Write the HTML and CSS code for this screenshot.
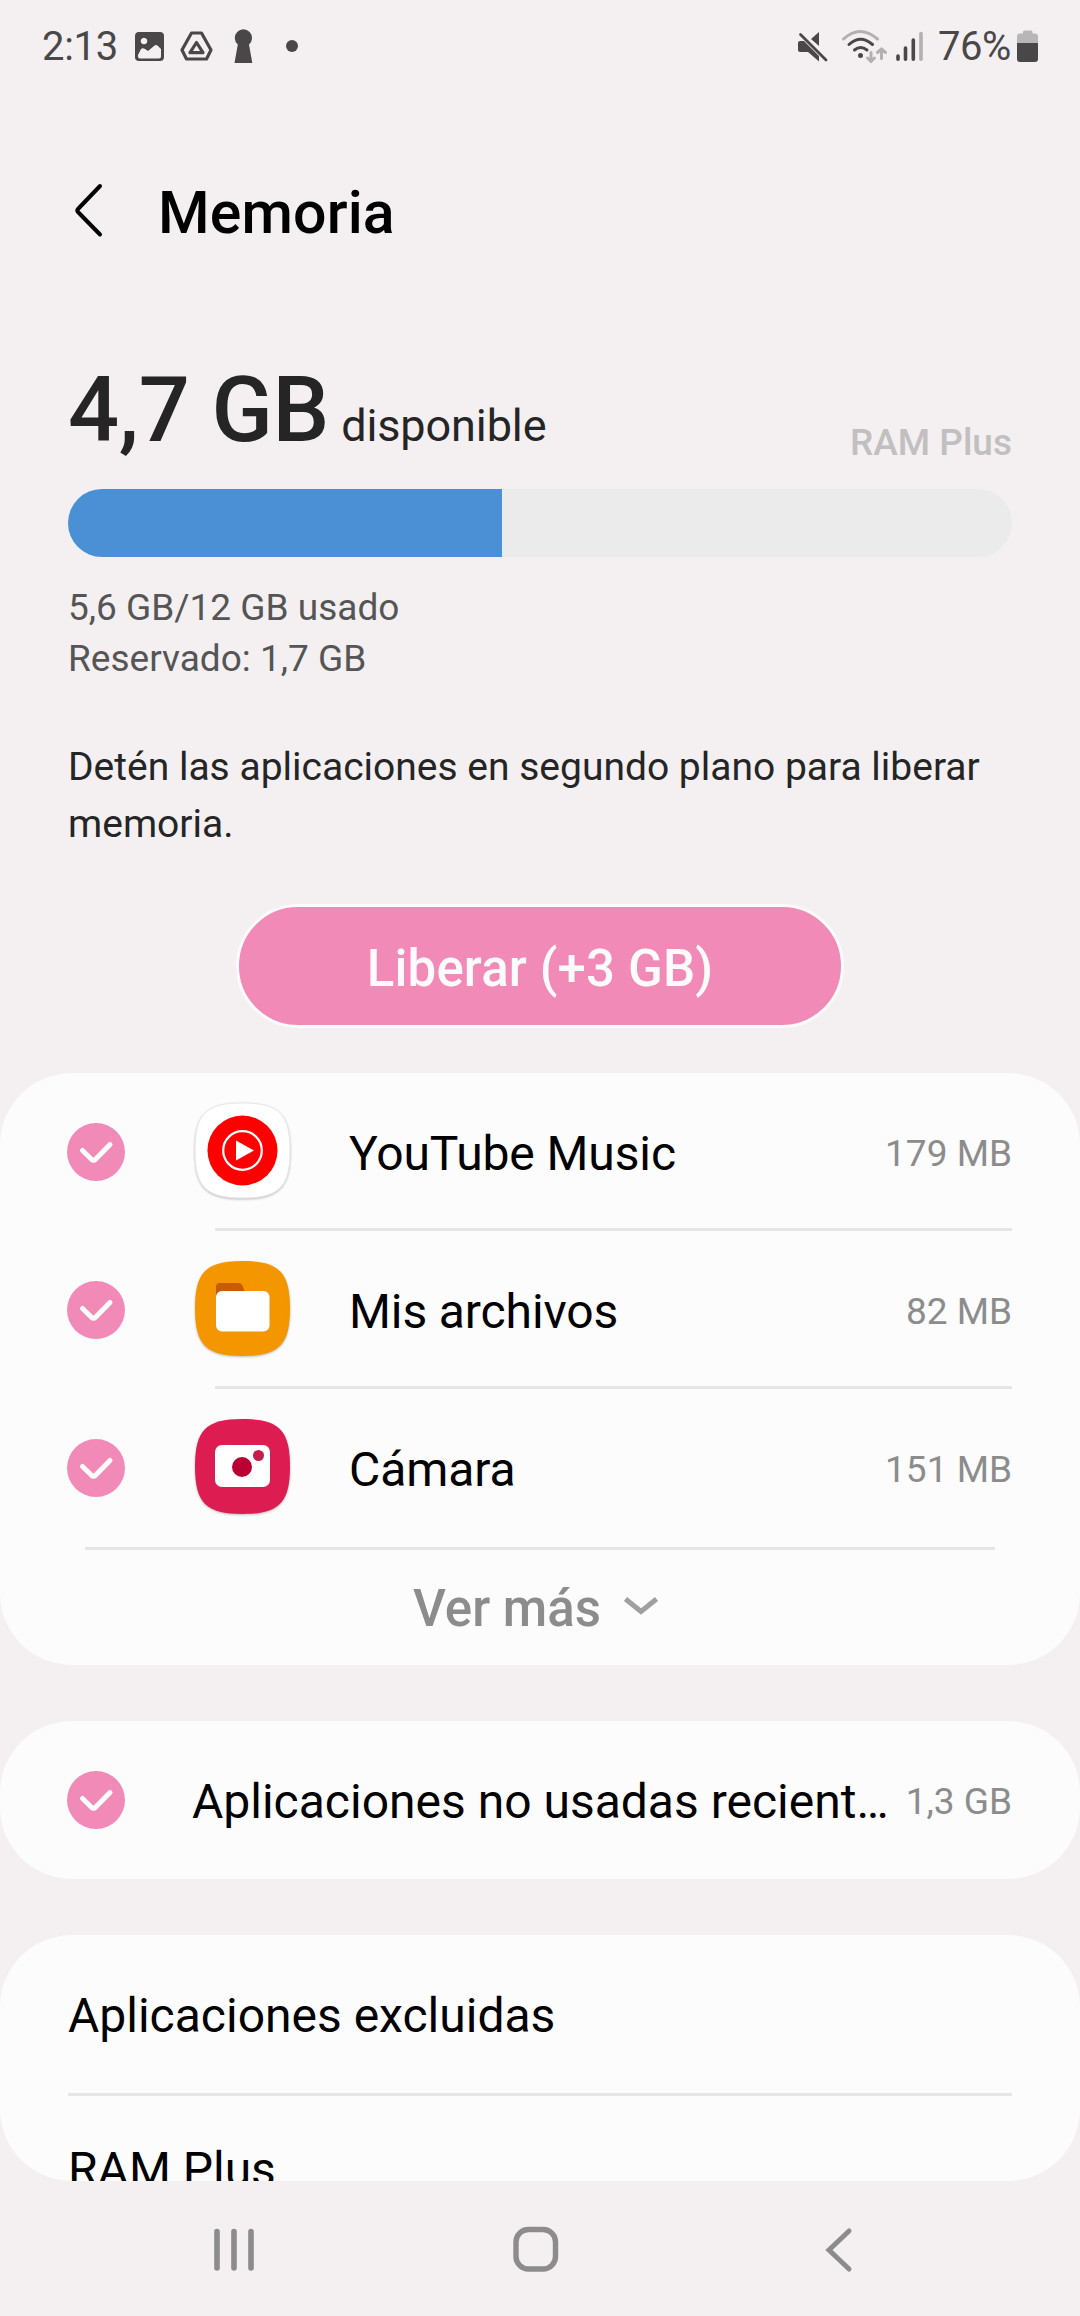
FILE: index.html
```html
<!DOCTYPE html>
<html lang="es">
<head>
<meta charset="utf-8">
<title>Memoria</title>
<link rel="stylesheet" href="styles.css">
</head>
<body>
<svg class="defs" aria-hidden="true">
  <symbol id="check" viewBox="0 0 58 58">
    <circle cx="29" cy="29" r="29" fill="#f18ab7"/>
    <path d="M15.500 27.500L24.500 36.300Q26.500 38 28.500 36.300L43 21.500" fill="none" stroke="#fcfcfc" stroke-width="5" stroke-linecap="round" stroke-linejoin="round"/>
  </symbol>
</svg>
<div class="screen">
  <header class="status">
    <span class="clock">2:13</span>
    <svg class="status-left" width="180" height="40" viewBox="130 26 180 40">
      <path fill="#4a4748" fill-rule="evenodd" d="M139 32h21a4 4 0 0 1 4 4v21a4 4 0 0 1-4 4h-21a4 4 0 0 1-4-4v-21a4 4 0 0 1 4-4zM144 37.700a3.300 3.300 0 1 0 .01 0zM138 55v1.500q0 2 2 2h19q2 0 2-2v-7.500l-3-3q-2-2-4 0l-6 5-3-2q-2-1.500-4 0z"/>
      <g fill="none" stroke="#4a4748" stroke-width="3.200" stroke-linejoin="round"><path d="M191.500 33h10l9.500 17-4.500 9h-20l-4.500-9z"/><path d="M196.500 42.500l6.500 10.200h-13z"/></g>
      <path fill="#4a4748" d="M234.500 63l3.300-18.500a8.600 8.600 0 1 1 11.200 0l3.300 18.500z"/>
      <circle cx="292" cy="46" r="6" fill="#4a4748"/>
    </svg>
    <svg class="status-right" width="132" height="40" viewBox="796 26 132 40">
      <path fill="#4a4748" d="M819 32v14l-8-7zM800 41h4l15 15v5.500l-11-9.500h-8q-2 0-2-2v-7q0-2 2-2z"/>
      <path d="M800.500 34.500l25.500 25.500" stroke="#4a4748" stroke-width="2.800" stroke-linecap="round"/>
      <g fill="none" stroke-width="3" stroke-linecap="round"><path d="M843.500 39q16.500-15 34 0" stroke="#b3b0b1"/><path d="M849 44.500q11.500-10.500 23.500 0M854.500 50q6-5 12.500 0" stroke="#4a4748"/></g>
      <circle cx="860.500" cy="55.500" r="2.500" fill="#4a4748"/>
      <path d="M871 52.500v8M867.500 58l3.500 3.500 3.500-3.500M881.500 58.500v-9M877.500 52.500l4-3.500 4 3.500" fill="none" stroke="#b3b0b1" stroke-width="3" stroke-linecap="round"/>
      <path d="M898 56v3.300M905.500 48v11.300M913.300 40v19.300" stroke="#4a4748" stroke-width="3.600" stroke-linecap="round"/>
      <path d="M921 33.500v25.800" stroke="#b3b0b1" stroke-width="3.600" stroke-linecap="round"/>
    </svg>
    <span class="percent">76%</span>
    <svg class="battery" width="22" height="32" viewBox="0 0 22 32"><path fill="#b9b6b7" d="M6 3.500V2q0-1.500 1.500-1.500h6.500q1.500 0 1.500 1.500v1.500h2.500q3 0 3 3v6.500h-21v-6.500q0-3 3-3z"/><path fill="#4a4748" d="M0 13h21v16q0 3-3 3h-15q-3 0-3-3z"/></svg>
  </header>

  <div class="titlebar">
    <svg class="back" width="30" height="56" viewBox="0 0 30 56"><path d="M27 3L5 26q-1.500 1.500 0 3L27 51.500" fill="none" stroke="#000" stroke-width="4" stroke-linecap="round" stroke-linejoin="round"/></svg>
    <h1>Memoria</h1>
  </div>

  <section class="summary">
    <div class="figures">
      <div class="available"><span class="amount">4,7 GB</span><span class="unit">disponible</span></div>
      <span class="plus">RAM Plus</span>
    </div>
    <div class="bar"><div class="fill" style="width:46%"></div></div>
    <p class="usage"><span>5,6 GB/12 GB usado</span><br><span>Reservado: 1,7 GB</span></p>
    <p class="hint"><span>Detén las aplicaciones en segundo plano para liberar</span><br>memoria.</p>
    <button class="free"><span>Liberar (+3 GB)</span></button>
  </section>

  <section class="card apps">
    <div class="row">
      <svg class="check"><use href="#check"/></svg>
      <svg class="icon" viewBox="0 0 99 99"><path class="shape" d="M49.500 2C86 2 97 13 97 49.500S86 97 49.500 97 2 86 2 49.500 13 2 49.500 2z" fill="#fff" stroke="#e8e8e8"/><circle cx="49.500" cy="49.500" r="35" fill="#f00"/><circle cx="49.500" cy="49.500" r="19.300" fill="none" stroke="#fff" stroke-width="2.200"/><path d="M43 39.500v20l18-10z" fill="#fff"/></svg>
      <span class="name">YouTube Music</span><span class="size">179 MB</span>
    </div>
    <div class="row">
      <svg class="check"><use href="#check"/></svg>
      <svg class="icon" viewBox="0 0 99 99"><path class="shape" d="M49.500 2C86 2 97 13 97 49.500S86 97 49.500 97 2 86 2 49.500 13 2 49.500 2z" fill="#f39600"/><path d="M23 40V28q0-4 4-4h18q4 0 5 4l2 5v7z" fill="#c65c0a"/><rect x="23" y="32" width="53.500" height="40.500" rx="6" fill="#fff"/></svg>
      <span class="name">Mis archivos</span><span class="size">82 MB</span>
    </div>
    <div class="row last">
      <svg class="check"><use href="#check"/></svg>
      <svg class="icon" viewBox="0 0 99 99"><path class="shape" d="M49.500 2C86 2 97 13 97 49.500S86 97 49.500 97 2 86 2 49.500 13 2 49.500 2z" fill="#dd1d51"/><rect x="22" y="28" width="55" height="42" rx="7" fill="#fff"/><circle cx="49" cy="50" r="10" fill="#b80035"/><circle cx="65.500" cy="38.500" r="5.500" fill="#c61b4c"/></svg>
      <span class="name">Cámara</span><span class="size">151 MB</span>
    </div>
    <div class="more"><span>Ver más</span><svg width="36" height="20" viewBox="0 0 36 20"><path d="M2.500 3L18 15.500 33.500 3" fill="none" stroke="#a0a0a0" stroke-width="5"/></svg></div>
  </section>

  <section class="card unused">
    <div class="row last">
      <svg class="check"><use href="#check"/></svg>
      <span class="name">Aplicaciones no usadas recient…</span><span class="size">1,3 GB</span>
    </div>
  </section>

  <section class="card settings">
    <div class="link excluded"><span>Aplicaciones excluidas</span></div>
    <div class="link ram"><span>RAM Plus</span></div>
  </section>

  <nav class="nav">
    <svg width="44" height="48" viewBox="0 0 44 48"><path d="M5 5.500v36.500M22 5.500v36.500M39 5.500v36.500" stroke="#8c8c8c" stroke-width="5.600" stroke-linecap="round"/></svg>
    <svg width="48" height="48" viewBox="0 0 48 48"><rect x="4" y="3.500" width="39.500" height="39.500" rx="12.500" fill="none" stroke="#8c8c8c" stroke-width="5.400"/></svg>
    <svg width="30" height="48" viewBox="0 0 30 48"><path d="M25 5L5 24l20 19" fill="none" stroke="#8c8c8c" stroke-width="5" stroke-linecap="round"/></svg>
  </nav>
</div>
</body>
</html>
```
FILE: styles.css
```css
* { box-sizing: border-box; }
body { margin: 0; background: #f4f0f2; font-family: Roboto, "Liberation Sans", sans-serif; color: #000; }
h1, p { margin: 0; font-weight: 400; }
svg { display: block; flex: none; }
span { white-space: nowrap; }
.defs { width: 0; height: 0; position: absolute; }
.screen { width: 1080px; height: 2316px; overflow: hidden; display: flex; flex-direction: column; }

.status { height: 92px; flex: none; display: flex; align-items: center; padding: 0 41px 0 42px; color: #4a4748; font-size: 40px; line-height: 92px; }
.clock { width: 88px; padding-top: 1px; letter-spacing: -0.300px; }
.status-right { margin-left: auto; }
.percent { margin-left: 10px; width: 76px; padding-top: 1px; letter-spacing: -0.500px; }
.battery { margin-left: 3px; }

.titlebar { height: 240px; flex: none; display: flex; align-items: center; padding: 2px 0 0 73px; }
.back { margin-top: -5px; }
h1 { margin-left: 55px; font-size: 59px; line-height: 70px; font-weight: 500; letter-spacing: 0.150px; }

.summary { height: 741px; flex: none; padding: 24px 68px 0; display: flex; flex-direction: column; }
.figures { height: 133px; display: flex; justify-content: space-between; }
.available { padding-top: 2px; font-size: 90px; line-height: 106px; color: #252525; }
.amount { font-weight: 500; letter-spacing: -0.300px; }
.unit { font-size: 45px; margin-left: 12px; letter-spacing: -0.100px; }
.plus { padding-top: 65px; font-size: 37px; line-height: 44px; font-weight: 500; color: #c1bfc0; }
.bar { height: 68px; flex: none; border-radius: 34px; overflow: hidden; background: #ebebeb; }
.fill { height: 100%; background: #4b8fd5; }
.usage { margin-top: 25px; font-size: 37px; line-height: 51px; color: #555; }
.hint { margin-top: 55px; font-size: 39px; line-height: 57px; color: #252525; }
.free { align-self: center; margin-top: 51px; width: 608px; height: 124px; flex: none; border: 3px solid #fcfafb; border-radius: 62px; background: #f18ab7; color: #fcfafb; font: 500 51px/60px Roboto, sans-serif; letter-spacing: 0.150px; padding: 6px 0 0; }

.card { flex: none; border-radius: 72px; background: #fcfcfc; }
.apps { height: 592px; }
.row { height: 158px; display: flex; align-items: center; padding: 0 68px 0 67px; background: linear-gradient(#e6e6e6, #e6e6e6) 215px 155px / 797px 3px no-repeat; }
.row.last { background: none; }
.check { width: 58px; height: 58px; }
.icon { width: 99px; height: 99px; margin: -3px 0 0 68px; overflow: visible; }
.shape { filter: drop-shadow(0 1.500px 1px rgba(0, 0, 0, .25)); }
.name { margin-left: 57px; font-size: 48px; line-height: 56px; padding-top: 4px; letter-spacing: -0.100px; }
.size { margin-left: auto; font-size: 37px; line-height: 44px; padding-top: 3px; color: #8c8c8c; }
.more { height: 118px; margin: 0 85px; border-top: 3px solid #e6e6e6; display: flex; justify-content: center; align-items: center; font-size: 51px; font-weight: 500; color: #8c8c8c; gap: 22px; padding: 2px 8px 0 0; }
.more svg { margin-top: -6px; }
.unused { height: 158px; margin-top: 56px; }
.unused .name { margin-left: 67px; letter-spacing: 0; }
.settings { height: 246px; margin-top: 56px; overflow: hidden; padding: 0 68px; font-size: 48px; line-height: 56px; }
.link { height: 161px; padding-top: 53px; }
.excluded { border-bottom: 3px solid #e6e6e6; }
.ram { padding-top: 46px; }

.nav { height: 135px; flex: none; display: flex; align-items: center; padding: 3px 0 0 212px; }
.nav svg:nth-child(2) { margin-left: 256px; }
.nav svg:nth-child(3) { margin-left: 264px; }
```
